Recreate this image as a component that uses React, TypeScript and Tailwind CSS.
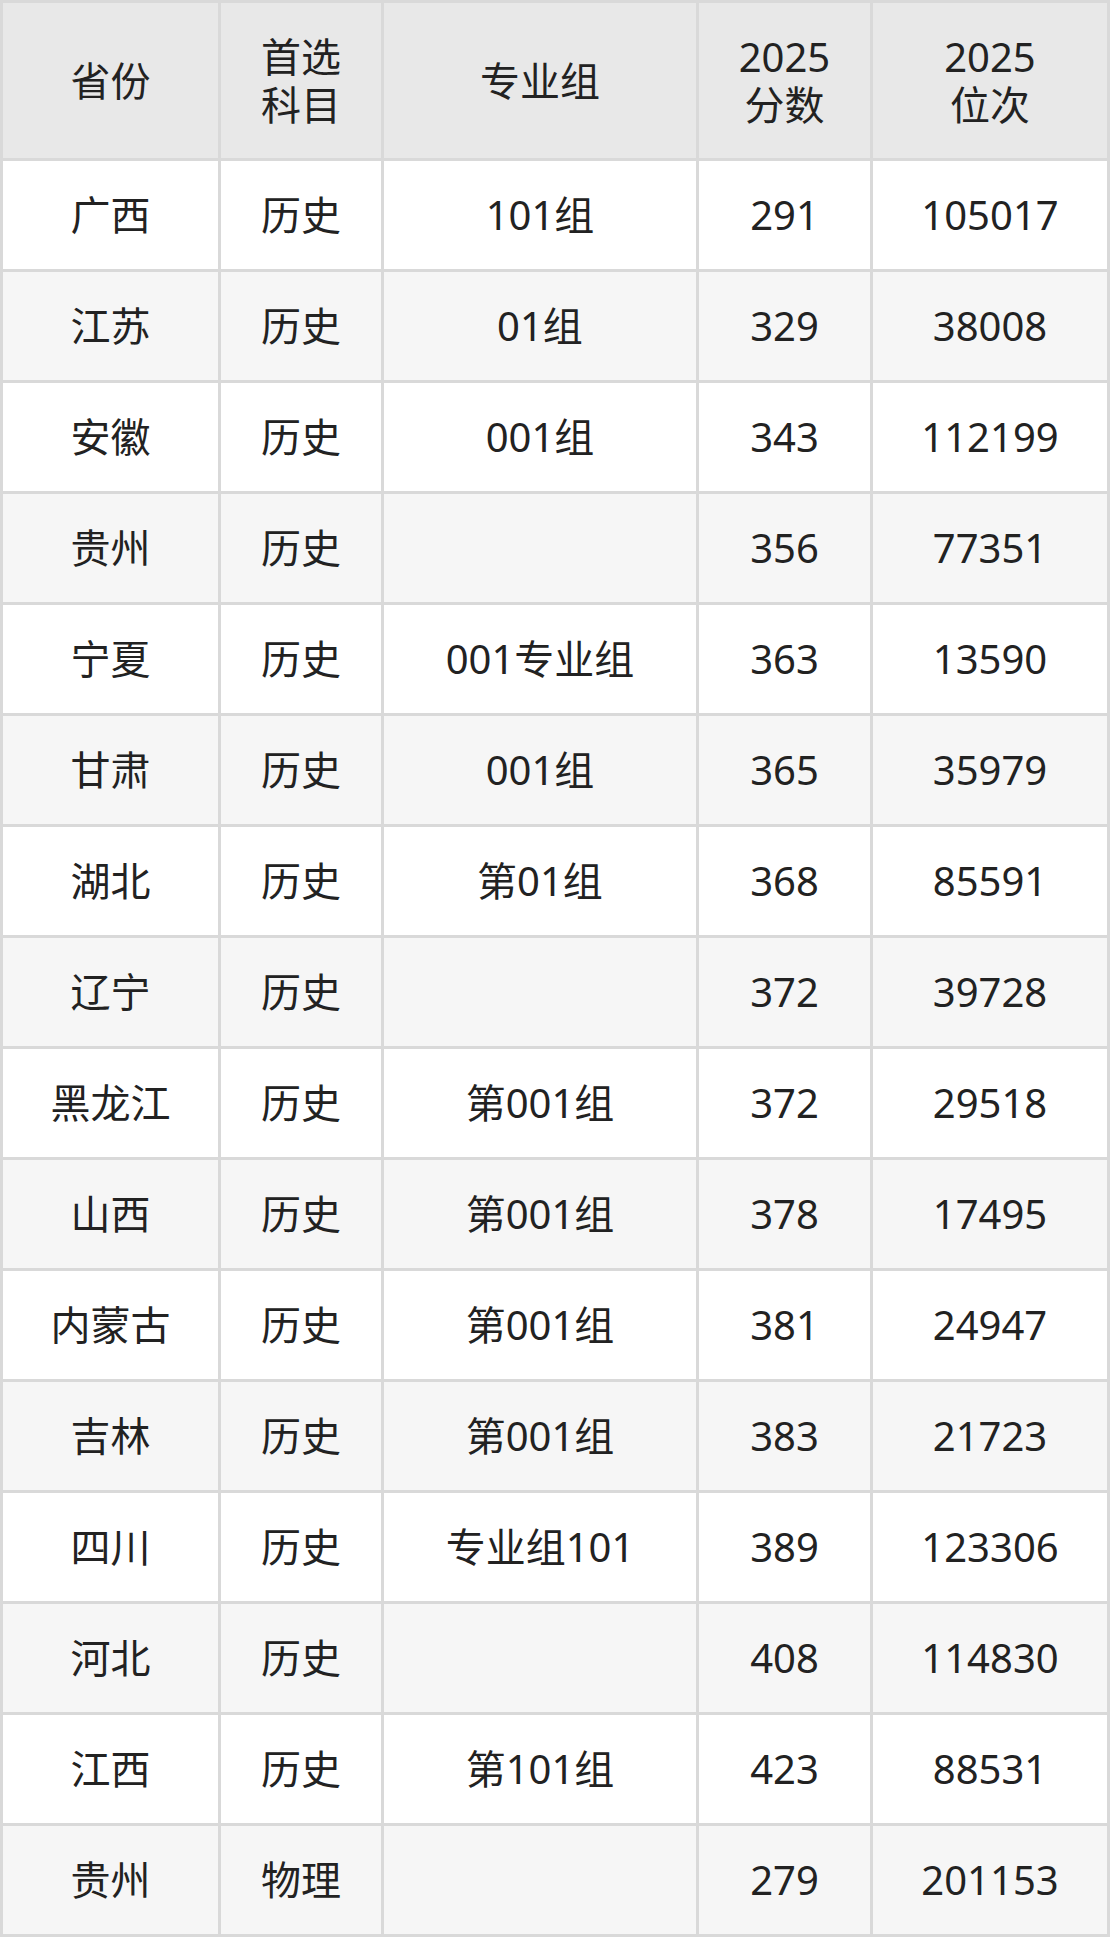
const rows: [string, string, string, string, string][] = [
  ["广西", "历史", "101组", "291", "105017"],
  ["江苏", "历史", "01组", "329", "38008"],
  ["安徽", "历史", "001组", "343", "112199"],
  ["贵州", "历史", "", "356", "77351"],
  ["宁夏", "历史", "001专业组", "363", "13590"],
  ["甘肃", "历史", "001组", "365", "35979"],
  ["湖北", "历史", "第01组", "368", "85591"],
  ["辽宁", "历史", "", "372", "39728"],
  ["黑龙江", "历史", "第001组", "372", "29518"],
  ["山西", "历史", "第001组", "378", "17495"],
  ["内蒙古", "历史", "第001组", "381", "24947"],
  ["吉林", "历史", "第001组", "383", "21723"],
  ["四川", "历史", "专业组101", "389", "123306"],
  ["河北", "历史", "", "408", "114830"],
  ["江西", "历史", "第101组", "423", "88531"],
  ["贵州", "物理", "", "279", "201153"],
]

const headers = [["省份"], ["首选", "科目"], ["专业组"], ["2025", "分数"], ["2025", "位次"]]

export default function App() {
  return (
    <div
      className="w-[1110px] bg-white text-[#222222]"
      style={{ fontFamily: '"Noto Sans", "Noto Sans CJK SC", sans-serif' }}
    >
      <div className="grid grid-cols-[215px_160px_312px_171px_234px] gap-[3px] bg-[#d9d9d9] p-[3px] text-[40px] leading-[48px]">
        {headers.map((h, i) => (
          <div key={i} className="h-[155px] bg-[#e8e8e8] flex flex-col items-center justify-center">
            {h.map((line) => (
              <span key={line}>{line}</span>
            ))}
          </div>
        ))}
        {rows.map((r, ri) =>
          r.map((cell, ci) => (
            <div
              key={`${ri}-${ci}`}
              className={`h-[108px] flex items-center justify-center ${ri % 2 === 0 ? "bg-white" : "bg-[#f6f6f6]"}`}
            >
              {cell}
            </div>
          )),
        )}
      </div>
    </div>
  )
}
